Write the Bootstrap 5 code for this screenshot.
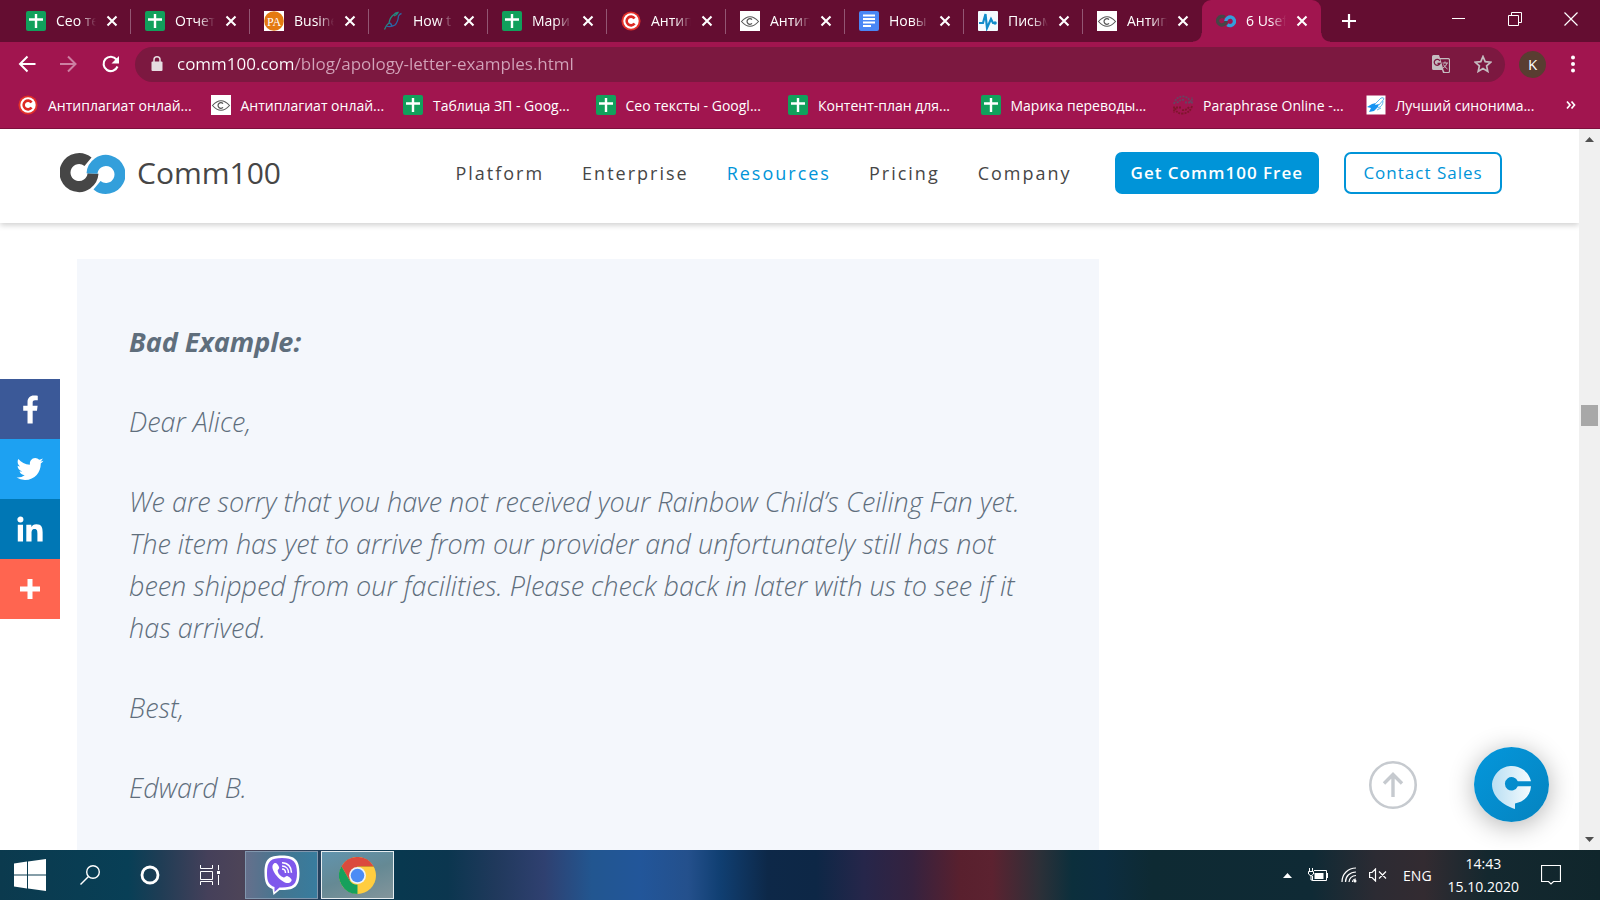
<!DOCTYPE html>
<html lang="en">
<head>
<meta charset="utf-8">
<meta name="viewport" content="width=device-width, initial-scale=1">
<title>6 Useful Apology Letter Examples</title>
<link href="https://cdn.jsdelivr.net/npm/bootstrap@5.3.0/dist/css/bootstrap.min.css" rel="stylesheet">
<style>
  :root { --plum: #640d31; --rose: #a1154f; --wine: #7c1840; --sky: #0094d8; }
  body { font-family: "Open Sans", "Noto Sans", sans-serif; font-size: 14px; background: #fff; }
  button { font-family: inherit; }
  svg { display: block; flex-shrink: 0; }
  .plain { background: none; border: 0; padding: 0; color: inherit; }

  /* tab strip */
  .strip { background: var(--plum); height: 42px; padding-left: 12px; }
  .tab { flex: 0 1 119px; min-width: 0; padding: 0 13px 0 14px; gap: 10px; position: relative; }
  .tab::after { content: ""; position: absolute; right: 0; top: 9px; bottom: 8px; width: 1px; background: #935673; }
  .tab.before-current::after { display: none; }
  .tab a { color: #fff; white-space: nowrap; overflow: hidden; flex: 1; min-width: 0; line-height: 20px;
    -webkit-mask-image: linear-gradient(90deg, #000 60%, transparent); mask-image: linear-gradient(90deg, #000 60%, transparent); }
  .tab.current { background: var(--rose); border-radius: 9px 9px 0 0; }
  .tab.current::before, .tab.current::after { content: ""; position: absolute; top: auto; bottom: 0; width: 9px; height: 9px; }
  .tab.current::before { left: -9px; background: radial-gradient(circle at 0 0, transparent 8px, var(--rose) 9px); }
  .tab.current::after { right: -9px; background: radial-gradient(circle at 100% 0, transparent 8px, var(--rose) 9px); }
  .new-tab { margin-left: 20px; }
  .window-keys { gap: 42px; padding-right: 22px; padding-bottom: 5px; }

  /* toolbar and bookmarks */
  .toolbar { background: var(--rose); height: 44px; padding: 0 24px 0 18px; }
  .omnibox { background: var(--wine); height: 35px; border-radius: 18px; padding: 0 13px 0 16px; margin: 0 14px 0 15px; }
  .omnibox input { flex: 1; min-width: 0; border: 0; outline: 0; padding: 0; margin-left: 14px; font-size: 17px; line-height: 24px;
    color: transparent; background: linear-gradient(90deg, #fff 117px, #d2a3b9 117px) text; -webkit-background-clip: text; }
  .avatar { width: 27px; height: 27px; background: #593d31; font-size: 15px; }
  .marks { background: var(--rose); height: 43px; border-bottom: 1px solid #7d0f3d; padding: 0 24px 4px 18px; }
  .marks a { color: #fff; flex: 1 1 0; min-width: 0; gap: 10px; white-space: nowrap; }

  /* site header */
  .site-head { height: 94px; padding: 0 77px 6px 60px; background: #fff; box-shadow: 0 2px 6px rgba(0,0,0,.2); z-index: 2; }
  .brand { color: #464646; font-size: 30px; font-weight: 500; gap: 12px; line-height: 42px; }
  .menu { gap: 38px; font-size: 18px; letter-spacing: 2px; margin-right: 43px; }
  .menu a { color: #464646; }
  .menu a.here { color: var(--sky); }
  .cta { font-size: 17px; letter-spacing: 1px; line-height: 22px; padding: 8px 14px; border: 2px solid var(--sky); border-radius: 7px; color: var(--sky); min-width: 158px; }
  .cta.solid { background: var(--sky); color: #fff; font-weight: 600; margin-right: 25px; }

  /* article */
  .letter { background: #f4f7fc; color: #5f6e7c; max-width: 1022px; margin: 36px 77px 0; padding: 62px 51px 40px 52px; font-size: 27px; line-height: 42px; font-style: italic; font-weight: 300; }
  .letter p { margin: 0 0 38px; }
  .letter strong { font-weight: 700; }
  .share { position: absolute; left: 0; top: 250px; z-index: 3; }
  .share a { width: 60px; height: 60px; }
  .to-top { position: absolute; right: 162px; bottom: 41px; }
  .chat { position: absolute; right: 30px; bottom: 28px; border-radius: 50%; box-shadow: 0 4px 26px rgba(0,0,0,.3); }
  .scroller { width: 21px; background: #f0f0f0; padding: 8px 2px; }
  .thumb { height: 21px; background: #a8a8a8; }

  /* desktop taskbar */
  .taskbar { height: 50px; color: #fff; background: linear-gradient(90deg, #0b3a4e 0, #083f56 8%, #1f3d55 10%, #45405a 13%, #4d4458 15%, #24405c 20%, #08384f 25%, #0b364f 28%, #20395c 31%, #2f4070 34%, #225690 37%, #22569a 40%, #24508c 43%, #103f72 45%, #0d2848 48%, #0d2746 51%, #26264a 54%, #35223f 57%, #59202e 60%, #5c2230 62%, #2c3038 65%, #0c2f3c 67%, #0c2d40 69%, #0e2a33 72%, #0f2a35 82%, #2c2b33 86%, #332b31 89%, #14282f 93%, #10262c 100%); }
  .launch { width: 60px; height: 50px; }
  .running { width: 73px; height: 48px; margin-right: 3px; border: 1px solid #8197ae; background: linear-gradient(90deg, #65708c, #437690 50%, #387c9e); }
  .running.front { border-color: #e6edf0; background: linear-gradient(160deg, #6194ae, #658994 50%, #83959b); }
  .apps { padding-right: 5px; }
  .tray { gap: 12px; padding-right: 39px; }
  .clock { line-height: 23px; margin: 0 10px 0 0; }
</style>
</head>
<body class="d-flex flex-column vh-100 overflow-hidden">

<svg width="0" height="0" class="position-absolute" aria-hidden="true">
  <defs>
    <symbol id="sheet" viewBox="0 0 20 20"><rect width="20" height="20" rx="2" fill="#11a05c"/><path d="M10 3v14M3 8.5h14" stroke="#fff" stroke-width="2.4"/></symbol>
    <symbol id="red-c" viewBox="0 0 20 20"><circle cx="10" cy="10" r="9.6" fill="#e33029"/><circle cx="10" cy="10" r="7.7" fill="#fff"/><path d="M13.600 7.400a4.400 4.400 0 1 0 0 5.200" fill="none" stroke="#dd2a24" stroke-width="2.600"/></symbol>
    <symbol id="eye" viewBox="0 0 20 20"><rect width="20" height="20" fill="#fff"/><path d="M1.500 10.500Q10 1 18.500 10.500Q10 20 1.500 10.500z" fill="none" stroke="#555" stroke-width="1.100"/><path d="M12 8.700a2.800 2.800 0 1 0 0 3.600" fill="none" stroke="#555" stroke-width="1.200"/></symbol>
    <symbol id="cross" viewBox="0 0 12 12"><path d="M1.500 1.500l9 9M10.500 1.500l-9 9" stroke="#fff" stroke-width="2.100"/></symbol>
    <symbol id="loop" viewBox="0 0 65 41"><path d="M28 8.800A14 14 0 1 0 33 20.500" fill="none" stroke="#464646" stroke-width="11"/><path d="M32 20.500A14 14 0 1 1 37 32.200" fill="none" stroke="#339fdb" stroke-width="11"/></symbol>
  </defs>
</svg>

<header class="text-white flex-shrink-0">
  <div class="strip d-flex align-items-stretch">
    <div class="tab d-flex align-items-center"><svg width="20" height="20"><use href="#sheet"/></svg><a href="#" class="text-decoration-none">Сео те</a><button class="plain" aria-label="Close tab"><svg width="12" height="12"><use href="#cross"/></svg></button></div>
    <div class="tab d-flex align-items-center"><svg width="20" height="20"><use href="#sheet"/></svg><a href="#" class="text-decoration-none">Отчет</a><button class="plain" aria-label="Close tab"><svg width="12" height="12"><use href="#cross"/></svg></button></div>
    <div class="tab d-flex align-items-center"><svg width="20" height="20" viewBox="0 0 20 20"><rect width="20" height="20" fill="#fff"/><circle cx="10" cy="10" r="9.800" fill="#e47911"/><text x="10" y="14.500" text-anchor="middle" font-family="Liberation Serif" font-size="12" fill="#fff">PA</text></svg><a href="#" class="text-decoration-none">Busine</a><button class="plain" aria-label="Close tab"><svg width="12" height="12"><use href="#cross"/></svg></button></div>
    <div class="tab d-flex align-items-center"><svg width="20" height="20" viewBox="0 0 20 20" fill="none" stroke-width="1.300"><path d="M1.500 18.500Q3 14 6 12Q7 6 11 3.500Q12 2 15 1.500Q14 4 11 5" stroke="#238b80"/><path d="M3 15Q8 16.500 12 14Q15 11 15.500 5Q16.500 3 18.500 2.500M9 15Q8 12 6 12" stroke="#2b66a5"/></svg><a href="#" class="text-decoration-none">How t</a><button class="plain" aria-label="Close tab"><svg width="12" height="12"><use href="#cross"/></svg></button></div>
    <div class="tab d-flex align-items-center"><svg width="20" height="20"><use href="#sheet"/></svg><a href="#" class="text-decoration-none">Мари</a><button class="plain" aria-label="Close tab"><svg width="12" height="12"><use href="#cross"/></svg></button></div>
    <div class="tab d-flex align-items-center"><svg width="20" height="20"><use href="#red-c"/></svg><a href="#" class="text-decoration-none">Антип</a><button class="plain" aria-label="Close tab"><svg width="12" height="12"><use href="#cross"/></svg></button></div>
    <div class="tab d-flex align-items-center"><svg width="20" height="20"><use href="#eye"/></svg><a href="#" class="text-decoration-none">Антип</a><button class="plain" aria-label="Close tab"><svg width="12" height="12"><use href="#cross"/></svg></button></div>
    <div class="tab d-flex align-items-center"><svg width="20" height="20" viewBox="0 0 20 20"><rect width="20" height="20" rx="2" fill="#4a86f5"/><path d="M4 4.500h12M4 8h12M4 11.500h12M4 15h8" stroke="#fff" stroke-width="1.900"/></svg><a href="#" class="text-decoration-none">Новы</a><button class="plain" aria-label="Close tab"><svg width="12" height="12"><use href="#cross"/></svg></button></div>
    <div class="tab d-flex align-items-center"><svg width="20" height="20" viewBox="0 0 20 20"><rect width="20" height="20" rx="1" fill="#f4fbff"/><path d="M1 12h4l2.500-9L9 17l4-9 2 4h3" fill="none" stroke="#128ccb" stroke-width="2.200"/><circle cx="17" cy="12" r="1.800" fill="#128ccb"/></svg><a href="#" class="text-decoration-none">Письм</a><button class="plain" aria-label="Close tab"><svg width="12" height="12"><use href="#cross"/></svg></button></div>
    <div class="tab before-current d-flex align-items-center"><svg width="20" height="20"><use href="#eye"/></svg><a href="#" class="text-decoration-none">Антип</a><button class="plain" aria-label="Close tab"><svg width="12" height="12"><use href="#cross"/></svg></button></div>
    <div class="tab current d-flex align-items-center"><svg width="20" height="20"><use href="#loop"/></svg><a href="#" class="text-decoration-none">6 Usef</a><button class="plain" aria-label="Close tab"><svg width="12" height="12"><use href="#cross"/></svg></button></div>
    <button class="plain new-tab" aria-label="New tab"><svg width="16" height="16" viewBox="0 0 16 16"><path d="M8 1v14M1 8h14" stroke="#fff" stroke-width="2.200"/></svg></button>
    <div class="window-keys d-flex align-items-center ms-auto">
      <button class="plain" aria-label="Minimize"><svg width="14" height="14" viewBox="0 0 14 14"><path d="M0 6.500h13" stroke="#fff"/></svg></button>
      <button class="plain" aria-label="Restore"><svg width="14" height="14" viewBox="0 0 14 14"><path d="M.5 3.500h10v10H.5zM3.500 3.500v-3h10v10h-3" fill="none" stroke="#fff"/></svg></button>
      <button class="plain" aria-label="Close"><svg width="14" height="14" viewBox="0 0 14 14"><path d="M.5.5l13 13M13.500.5l-13 13" stroke="#fff" stroke-width="1.200"/></svg></button>
    </div>
  </div>

  <div class="toolbar d-flex align-items-center">
    <button class="plain" aria-label="Back"><svg width="18" height="18" viewBox="0 0 18 18" fill="none" stroke="#fff" stroke-width="2"><path d="M17.500 9H2.500M9.500 1.500L2 9l7.500 7.500"/></svg></button>
    <button class="plain ms-4" aria-label="Forward"><svg width="18" height="18" viewBox="0 0 18 18" fill="none" stroke="#cd80a2" stroke-width="2"><path d="M0 9h15M8 1.500L15.500 9 8 16.500"/></svg></button>
    <button class="plain ms-4" aria-label="Reload"><svg width="18" height="18" viewBox="0 0 18 18"><path d="M14.500 4.500A7.200 7.200 0 1 0 15.500 11.500" fill="none" stroke="#fff" stroke-width="2.100"/><path d="M17 1v7.500H9.500z" fill="#fff"/></svg></button>
    <div class="omnibox d-flex align-items-center flex-fill">
      <svg width="12" height="16" viewBox="0 0 12 16"><rect x=".5" y="5.500" width="11" height="9.500" rx="1" fill="#e6dde1"/><path d="M3 6V3.800a3 3 0 0 1 6 0V6" fill="none" stroke="#e6dde1" stroke-width="1.500"/></svg>
      <input type="text" aria-label="Address" value="comm100.com/blog/apology-letter-examples.html">
      <button class="plain" aria-label="Translate"><svg width="18" height="18" viewBox="0 0 18 18"><path d="M1.500 0H7l1 3h8.500A1.500 1.500 0 0 1 18 4.500v12a1.500 1.500 0 0 1-1.500 1.500H11l-1-3H1.500A1.500 1.500 0 0 1 0 13.500v-12A1.500 1.500 0 0 1 1.500 0z" fill="#c5bcc0"/><path d="M8.500 4.200h7.700a.7.7 0 0 1 .7.700v11.300a.7.7 0 0 1-.7.700H12.500l-1-2z" fill="#7c1840"/><path d="M7.800 5.800A3 3 0 1 0 8 8.500H5.500" fill="none" stroke="#7c1840" stroke-width="1.300"/><path d="M10.500 8H16M13 6.500V8M15 8q-.8 3.500-4 5M11.500 9.500q1 2.500 4 4.500" fill="none" stroke="#c5bcc0"/></svg></button>
      <button class="plain ms-4" aria-label="Bookmark this page"><svg width="18" height="18" viewBox="0 0 18 18"><path d="M9 1.500l2.200 5.200 5.600.5-4.200 3.700 1.200 5.500L9 13.500l-4.800 2.900 1.200-5.500L1.200 7.200l5.600-.5z" fill="none" stroke="#c5bcc0" stroke-width="1.700"/></svg></button>
    </div>
    <button class="plain avatar rounded-circle">K</button>
    <button class="plain ms-4" aria-label="Menu"><svg width="6" height="18" viewBox="0 0 6 18" fill="#fff"><circle cx="3" cy="2.500" r="2"/><circle cx="3" cy="9" r="2"/><circle cx="3" cy="15.500" r="2"/></svg></button>
  </div>

  <nav class="marks d-flex align-items-center" aria-label="Bookmarks">
    <a href="#" class="d-flex align-items-center text-decoration-none"><svg width="20" height="20"><use href="#red-c"/></svg>Антиплагиат онлай...</a>
    <a href="#" class="d-flex align-items-center text-decoration-none"><svg width="20" height="20"><use href="#eye"/></svg>Антиплагиат онлай...</a>
    <a href="#" class="d-flex align-items-center text-decoration-none"><svg width="20" height="20"><use href="#sheet"/></svg>Таблица ЗП - Goog...</a>
    <a href="#" class="d-flex align-items-center text-decoration-none"><svg width="20" height="20"><use href="#sheet"/></svg>Сео тексты - Googl...</a>
    <a href="#" class="d-flex align-items-center text-decoration-none"><svg width="20" height="20"><use href="#sheet"/></svg>Контент-план для...</a>
    <a href="#" class="d-flex align-items-center text-decoration-none"><svg width="20" height="20"><use href="#sheet"/></svg>Марика переводы...</a>
    <a href="#" class="d-flex align-items-center text-decoration-none"><svg width="20" height="20" viewBox="0 0 20 20" fill="none" stroke-width="1.800" stroke-dasharray="2 1"><path d="M1 9Q3 2 9 1.500t9 6M12 7.500h7V2M4 8q3-4 8-3" stroke="#674461"/><path d="M19 11q-2 7-9 7.500T2 12.500M8 12.500H1V18M16 12q-3 4-8 3" stroke="#7f162c"/></svg>Paraphrase Online -...</a>
    <a href="#" class="d-flex align-items-center text-decoration-none"><svg width="20" height="20" viewBox="0 0 20 20"><rect x=".5" y=".5" width="19" height="19" fill="#fff"/><path d="M1 12l5-3 4-1-1 2 4-1-1 3-4 4-5 1 2-4z" fill="#1594f2"/><path d="M9 9l6-6q3-1 3 1l-5 6M12 13q5-2 5-7M11 15l4-2" fill="none" stroke="#5eb4ee"/></svg>Лучший синонима...</a>
    <button class="plain ms-2" aria-label="More bookmarks"><svg width="10" height="10" viewBox="0 0 10 10"><path d="M1 1.500L4 5 1 8.500M5.500 1.500l3 3.500-3 3.500" fill="none" stroke="#fff" stroke-width="1.700"/></svg></button>
  </nav>
</header>

<div class="d-flex flex-fill overflow-hidden">
  <div class="flex-fill position-relative overflow-hidden">
    <header class="site-head d-flex align-items-center position-relative">
      <a href="#" class="brand d-flex align-items-center text-decoration-none"><svg width="65" height="41"><use href="#loop"/></svg>Comm100</a>
      <nav class="menu d-flex ms-auto">
        <a href="#" class="text-decoration-none">Platform</a>
        <a href="#" class="text-decoration-none">Enterprise</a>
        <a href="#" class="text-decoration-none here">Resources</a>
        <a href="#" class="text-decoration-none">Pricing</a>
        <a href="#" class="text-decoration-none">Company</a>
      </nav>
      <a href="#" class="btn cta solid">Get Comm100 Free</a>
      <a href="#" class="btn cta">Contact Sales</a>
    </header>

    <main class="letter">
      <p><strong>Bad Example:</strong></p>
      <p>Dear Alice,</p>
      <p>We are sorry that you have not received your Rainbow Child’s Ceiling Fan yet. The item has yet to arrive from our provider and unfortunately still has not been shipped from our facilities. Please check back in later with us to see if it has arrived.</p>
      <p>Best,</p>
      <p>Edward B.</p>
    </main>

    <aside class="share d-flex flex-column">
      <a href="#" aria-label="Facebook" class="d-flex align-items-center justify-content-center" style="background:#3b5998"><svg width="39" height="39" viewBox="0 0 32 32" fill="#fff"><path d="M17.780 27.500V17.008h3.522l.527-4.090h-4.050v-2.610c0-1.182.330-1.990 2.023-1.990h2.166V4.660c-.375-.050-1.660-.160-3.155-.160-3.123 0-5.260 1.905-5.260 5.405v3.016h-3.530v4.090h3.530V27.500h4.223z"/></svg></a>
      <a href="#" aria-label="Twitter" class="d-flex align-items-center justify-content-center" style="background:#1da1f2"><svg width="36" height="36" viewBox="0 0 32 32" fill="#fff"><path d="M28 8.557a9.913 9.913 0 0 1-2.828.775 4.930 4.930 0 0 0 2.166-2.725 9.738 9.738 0 0 1-3.130 1.194 4.920 4.920 0 0 0-3.593-1.550 4.924 4.924 0 0 0-4.794 6.049c-4.090-.210-7.720-2.170-10.150-5.150a4.942 4.942 0 0 0-.665 2.477c0 1.710.870 3.214 2.190 4.100a4.968 4.968 0 0 1-2.230-.616v.060c0 2.390 1.700 4.380 3.952 4.830-.414.115-.850.174-1.297.174-.318 0-.626-.030-.928-.086a4.935 4.935 0 0 0 4.600 3.420 9.893 9.893 0 0 1-6.114 2.107c-.398 0-.790-.023-1.175-.068a13.953 13.953 0 0 0 7.550 2.213c9.056 0 14.010-7.507 14.010-14.013 0-.213-.005-.426-.015-.637.960-.695 1.795-1.560 2.455-2.550z"/></svg></a>
      <a href="#" aria-label="LinkedIn" class="d-flex align-items-center justify-content-center" style="background:#0077b5"><svg width="40" height="40" viewBox="0 0 32 32" fill="#fff"><path d="M6.227 12.610h4.190v13.480h-4.190V12.610zm2.095-6.700a2.430 2.430 0 0 1 0 4.860c-1.344 0-2.428-1.090-2.428-2.430s1.084-2.430 2.428-2.430m4.720 6.700h4.020v1.840h.058c.560-1.058 1.927-2.176 3.965-2.176 4.238 0 5.020 2.792 5.020 6.420v7.395h-4.183v-6.560c0-1.564-.030-3.574-2.178-3.574-2.180 0-2.514 1.700-2.514 3.460v6.668h-4.187V12.610z"/></svg></a>
      <a href="#" aria-label="More" class="d-flex align-items-center justify-content-center" style="background:#ff6550"><svg width="20" height="20" viewBox="0 0 20 20"><path d="M10 0v20M0 10h20" stroke="#fff" stroke-width="5"/></svg></a>
    </aside>

    <button class="plain to-top" aria-label="Back to top"><svg width="48" height="48" viewBox="0 0 48 48" fill="none" stroke="#c6cacf"><circle cx="24" cy="24" r="22.700" stroke-width="2.600"/><path d="M24 36V14M15 22.500l9-9 9 9" stroke-width="3.400"/></svg></button>
    <button class="plain chat" aria-label="Chat"><svg width="75" height="75" viewBox="0 0 75 75"><defs><linearGradient id="disc" x1="0" y1="0" x2="1" y2="1"><stop offset="0" stop-color="#0497dc"/><stop offset="1" stop-color="#0583bf"/></linearGradient><linearGradient id="drop"><stop offset="0" stop-color="#b9dff3"/><stop offset="1" stop-color="#f5fbfe"/></linearGradient></defs><circle cx="37.500" cy="37.500" r="37.500" fill="url(#disc)"/><path d="M57 34.300A19.800 19.800 0 0 0 18 37C18 50 29 58 41 62V56.500C51 54.500 56.500 48 57 39.300H43.800a6.700 6.700 0 1 1 0-5z" fill="url(#drop)"/></svg></button>
  </div>

  <div class="scroller d-flex flex-column flex-shrink-0" aria-hidden="true">
    <svg class="mx-auto" width="9" height="5" viewBox="0 0 9 5"><path d="M0 5l4.500-5L9 5z" fill="#505050"/></svg>
    <div style="flex:39"></div>
    <div class="thumb"></div>
    <div style="flex:61"></div>
    <svg class="mx-auto" width="9" height="5" viewBox="0 0 9 5"><path d="M0 0l4.500 5L9 0z" fill="#505050"/></svg>
  </div>
</div>

<footer class="taskbar d-flex align-items-center flex-shrink-0">
  <div class="apps d-flex">
    <button class="plain launch d-flex align-items-center justify-content-center" aria-label="Start"><svg width="32" height="32" viewBox="0 0 32 32" fill="#fff"><path d="M0 4.500l13-1.900V15.500H0zM14 2.500L32 0v15.500H14zM0 16.500h13v13L0 27.500zM14 16.500h18V32l-18-2.400z"/></svg></button>
    <button class="plain launch d-flex align-items-center justify-content-center" aria-label="Search"><svg width="20" height="20" viewBox="0 0 20 20" fill="none" stroke="#fff" stroke-width="1.400"><circle cx="13" cy="7" r="6.300"/><path d="M8.500 11.500L.5 19.500"/></svg></button>
    <button class="plain launch d-flex align-items-center justify-content-center" aria-label="Cortana"><svg width="20" height="20" viewBox="0 0 20 20"><circle cx="10" cy="10" r="8" fill="none" stroke="#fff" stroke-width="2.800"/></svg></button>
    <button class="plain launch d-flex align-items-center justify-content-center" aria-label="Task view"><svg width="20" height="20" viewBox="0 0 20 20" fill="none" stroke="#fff"><path d="M.5 0v3.500h12V0M.5 6.500h12v8H.5zM.5 20v-3.500h12V20M18.500 0v5M18.500 10v10"/><path d="M17 6h3v3h-3z" fill="#fff" stroke="none"/></svg></button>
  </div>
  <button class="plain running d-flex align-items-center justify-content-center" aria-label="Viber"><svg width="38" height="42" viewBox="0 0 38 42"><path d="M19 1.500C6 1.500 1.500 5 1.500 19c0 9 2 14 8 16l1 6 6-5h3C32 36 36.500 32 36.500 19S32 1.500 19 1.500z" fill="#fff"/><path d="M19 4C8 4 4 7 4 19c0 8 1.500 12 7.500 14v5l5-4.500H19c11 0 15-3 15-14.500S30 4 19 4z" fill="#7f59ec"/><path d="M11 9.500c2-1.500 4 1 5 3.500.8 2-1.500 2.500-1.300 4 .5 3 3 5.500 6 6.500 1.500.3 2-2 4-1.300 2.500 1.300 5 3.500 3.500 5-2.500 3-5 2-8 .2-5-3-9-8-10.500-12.500-.6-2.500-.3-4 1.300-5.400z" fill="#fff"/><path d="M19 15c2 0 3.500 1.500 3.500 4M19 12c4 0 6.500 3 6.500 7M19 8.800c6 0 9.500 4.200 9.500 10" fill="none" stroke="#fff" stroke-width="1.500"/></svg></button>
  <button class="plain running front d-flex align-items-center justify-content-center" aria-label="Chrome"><svg width="37" height="37" viewBox="0 0 48 48"><circle cx="24" cy="24" r="24" fill="#ffcd40"/><path d="M24 24L13.600 30 3.200 12A24 24 0 0 1 44.800 12H24z" fill="#db4a3e"/><path d="M3.200 12L13.600 30A12 12 0 0 0 24 36l6-3.500L24 48A24 24 0 0 1 3.200 12z" fill="#16a05c"/><path d="M24 48L34.400 30 24 24z" fill="#ffcd40"/><path d="M24 13h22l-1.200-1H24z" fill="#c4862b"/><circle cx="24" cy="24" r="11" fill="#eef3f5"/><circle cx="24" cy="24" r="8.800" fill="#4b8cf5"/></svg></button>

  <div class="tray d-flex align-items-center ms-auto">
    <button class="plain me-1" aria-label="Show hidden icons"><svg width="9" height="5" viewBox="0 0 9 5"><path d="M0 5l4.500-5L9 5z" fill="#fff"/></svg></button>
    <svg width="21" height="14" viewBox="0 0 21 14" fill="none" stroke="#fff"><path d="M6 2.500h12.500v10h-14V8M19.500 5v5"/><path d="M6.500 5h9v6h-9z" fill="#fff" stroke="none"/><path d="M1.500 0v3M4.500 0v3M.5 3.500h5V6L3 8 .5 6z"/><path d="M3 8v4h2"/></svg>
    <svg width="16" height="16" viewBox="0 0 16 16" fill="none" stroke="#fff" stroke-width="1.200"><path d="M1 15C1 7 7 1 15 1M4.500 15C4.500 9 9 5 15 5M8 15c0-3.500 3-6.500 7-6.500M11.500 15c0-1.500 1.500-3 3.500-3"/><circle cx="14" cy="14" r="1.500" fill="#fff" stroke="none"/></svg>
    <svg width="18" height="14" viewBox="0 0 18 14" fill="none" stroke="#fff" stroke-width="1.200"><path d="M.6 4.500h2.400L6.500 1v12L3 9.500H.6zM10 3.500l7 7M17 3.500l-7 7"/></svg>
    <button class="plain px-1">ENG</button>
    <time class="clock text-center" datetime="2020-10-15T14:43">14:43<br>15.10.2020</time>
    <button class="plain" aria-label="Notifications"><svg width="20" height="20" viewBox="0 0 20 20"><path d="M.5.5h19v16h-7L10 19l-2.500-2.500h-7z" fill="none" stroke="#fff" stroke-width="1.200"/></svg></button>
  </div>
</footer>

<script src="https://cdn.jsdelivr.net/npm/bootstrap@5.3.0/dist/js/bootstrap.bundle.min.js"></script>
</body>
</html>
